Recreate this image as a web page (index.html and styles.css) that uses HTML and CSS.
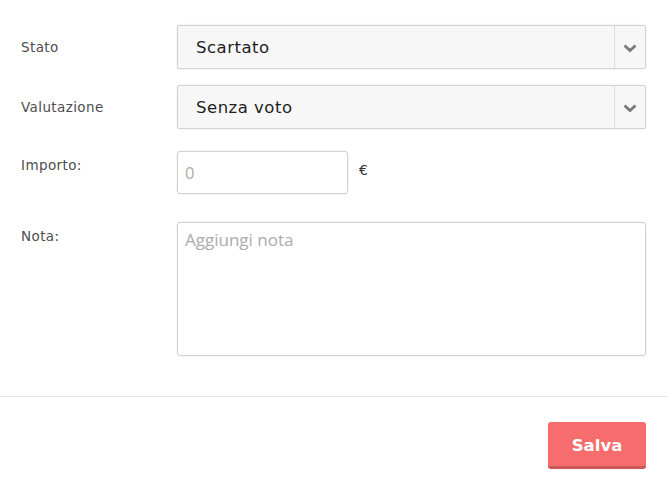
FILE: index.html
```html
<!DOCTYPE html>
<html lang="it">
<head>
    <meta charset="UTF-8">
    <meta name="viewport" content="width=device-width, initial-scale=1.0">
    <title>Candidatura</title>
    <link rel="stylesheet" href="styles.css">
</head>
<body>
    <form class="form" onsubmit="return false">
        <div class="field">
            <label class="label" for="stato">Stato</label>
            <div class="select">
                <select id="stato">
                    <option>Scartato</option>
                    <option>In attesa</option>
                    <option>Assunto</option>
                </select>
                <span class="arrow">
                    <svg width="14" height="9" viewBox="0 0 14 9"><path d="M1.5 1.5 L7 6.5 L12.5 1.5" fill="none" stroke="#7a7a7a" stroke-width="2.8"/></svg>
                </span>
            </div>
        </div>

        <div class="field field-rating">
            <label class="label" for="voto">Valutazione</label>
            <div class="select">
                <select id="voto">
                    <option>Senza voto</option>
                    <option>1</option>
                    <option>2</option>
                    <option>3</option>
                </select>
                <span class="arrow">
                    <svg width="14" height="9" viewBox="0 0 14 9"><path d="M1.5 1.5 L7 6.5 L12.5 1.5" fill="none" stroke="#7a7a7a" stroke-width="2.8"/></svg>
                </span>
            </div>
        </div>

        <div class="field field-top field-amount">
            <label class="label" for="importo">Importo:</label>
            <input class="input" type="text" id="importo" placeholder="0">
            <span class="currency">€</span>
        </div>

        <div class="field field-top field-note">
            <label class="label" for="nota">Nota:</label>
            <textarea class="textarea" id="nota" placeholder="Aggiungi nota"></textarea>
        </div>

        <div class="footer">
            <button class="btn-save" type="submit">Salva</button>
        </div>
    </form>
</body>
</html>
```

FILE: styles.css
```css
* { margin: 0; padding: 0; box-sizing: border-box; }
body { background: #fff; font-family: "DejaVu Sans", Verdana, sans-serif; }
.form { padding-top: 25px; }
.field { display: flex; align-items: center; padding: 0 22px 0 21px; margin-bottom: 16px; }
.field-rating { margin-bottom: 22px; }
.field-amount { margin-bottom: 28px; }
.field-note { margin-bottom: 40px; }
.field-top { align-items: flex-start; }
.label { width: 156px; flex-shrink: 0; font-size: 13.5px; letter-spacing: 0.4px; color: #4d4d4d; line-height: 20px; }
.field-top .label { padding-top: 4px; }
.select { flex: 1; display: flex; height: 44px; background: #f7f7f7; border: 1px solid #d2d2d2; border-radius: 2px; box-shadow: 0 0 3px rgba(0,0,0,0.08); }
.select select { flex: 1; appearance: none; -webkit-appearance: none; border: none; background: transparent; outline: none; padding-left: 18px; font-family: "DejaVu Sans", Verdana, sans-serif; font-size: 16.5px; letter-spacing: 0.5px; color: #1e1e1e; }
.select .arrow { width: 31px; display: flex; align-items: center; justify-content: center; border-left: 1px solid #dedede; padding-top: 3px; }
.input { width: 171px; height: 43px; border: 1px solid #d0d0d0; border-radius: 3px; box-shadow: 0 0 3px rgba(0,0,0,0.08); padding-left: 7px; font-family: "Open Sans", sans-serif; font-size: 16.5px; color: #333; outline: none; }
.input::placeholder, .textarea::placeholder { color: #ababab; }
.currency { margin-left: 11px; margin-top: 11px; font-size: 14px; color: #333; }
.textarea { flex: 1; height: 134px; border: 1px solid #d0d0d0; border-radius: 3px; box-shadow: 0 0 3px rgba(0,0,0,0.08); padding: 5px 7px; font-family: "Open Sans", sans-serif; font-size: 17px; color: #333; resize: none; outline: none; }
.footer { display: flex; justify-content: flex-end; border-top: 1px solid #e6e6e6; padding: 25px 22px 0 0; }
.btn-save { width: 98px; height: 47px; background: #f76d6d; border: none; border-bottom: 3px solid #cf5757; border-radius: 3px; color: #fff; font-family: "DejaVu Sans", Verdana, sans-serif; font-weight: bold; font-size: 16.5px; cursor: pointer; padding-top: 2px; }
```
